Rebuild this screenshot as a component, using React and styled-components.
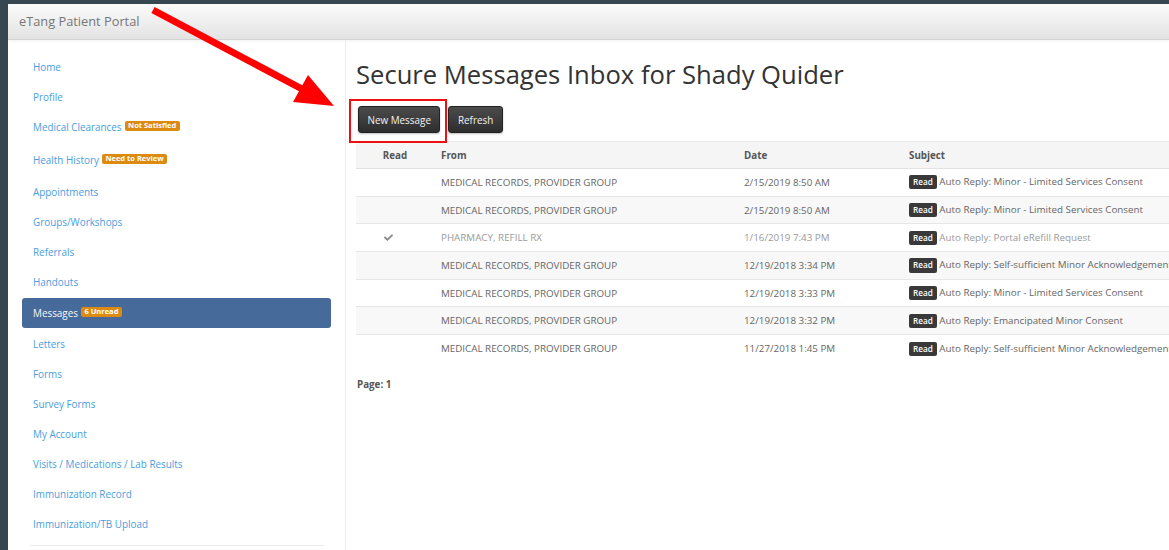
import styled, { createGlobalStyle } from "styled-components";

const GlobalStyle = createGlobalStyle`
  html, body {
    margin: 0;
    padding: 0;
    background: #364751;
    overflow: hidden;
  }
  body {
    font-family: "Open Sans", "Liberation Sans", Arial, sans-serif;
    -webkit-font-smoothing: antialiased;
  }
  * { box-sizing: border-box; }
`;

const navItems = [
  { label: "Home" },
  { label: "Profile" },
  { label: "Medical Clearances", badge: "Not Satisfied" },
  { label: "Health History", badge: "Need to Review", roomy: true },
  { label: "Appointments" },
  { label: "Groups/Workshops" },
  { label: "Referrals" },
  { label: "Handouts" },
  { label: "Messages", badge: "6 Unread", active: true },
  { label: "Letters" },
  { label: "Forms" },
  { label: "Survey Forms" },
  { label: "My Account" },
  { label: "Visits / Medications / Lab Results" },
  { label: "Immunization Record" },
  { label: "Immunization/TB Upload" },
];

const messages = [
  { from: "MEDICAL RECORDS, PROVIDER GROUP", date: "2/15/2019 8:50 AM", subject: "Auto Reply: Minor - Limited Services Consent" },
  { from: "MEDICAL RECORDS, PROVIDER GROUP", date: "2/15/2019 8:50 AM", subject: "Auto Reply: Minor - Limited Services Consent" },
  { from: "PHARMACY, REFILL RX", date: "1/16/2019 7:43 PM", subject: "Auto Reply: Portal eRefill Request", read: true },
  { from: "MEDICAL RECORDS, PROVIDER GROUP", date: "12/19/2018 3:34 PM", subject: "Auto Reply: Self-sufficient Minor Acknowledgement" },
  { from: "MEDICAL RECORDS, PROVIDER GROUP", date: "12/19/2018 3:33 PM", subject: "Auto Reply: Minor - Limited Services Consent" },
  { from: "MEDICAL RECORDS, PROVIDER GROUP", date: "12/19/2018 3:32 PM", subject: "Auto Reply: Emancipated Minor Consent" },
  { from: "MEDICAL RECORDS, PROVIDER GROUP", date: "11/27/2018 1:45 PM", subject: "Auto Reply: Self-sufficient Minor Acknowledgement" },
];

function CheckIcon() {
  return (
    <Check width="9" height="7" viewBox="0 0 512 400" fill="#8a8a8a">
      <path d="M173.9 388.3L7.5 221.9c-10-10-10-26.2 0-36.2l36.2-36.2c10-10 26.2-10 36.2 0L192 261.6 432.1 21.5c10-10 26.2-10 36.2 0l36.2 36.2c10 10 10 26.2 0 36.2L210.1 388.3c-10 10-26.2 10-36.2 0z" />
    </Check>
  );
}

export default function App() {
  return (
    <Page>
      <GlobalStyle />
      <Frame>
        <TopBar>
          <Brand>eTang Patient Portal</Brand>
        </TopBar>
        <Body>
          <Sidebar>
            <NavList>
              {navItems.map((item) => (
                <NavItem key={item.label} $active={item.active} $roomy={item.roomy}>
                  {item.label}
                  {item.badge && <Badge>{item.badge}</Badge>}
                </NavItem>
              ))}
            </NavList>
            <Divider />
          </Sidebar>
          <Main>
            <Title>Secure Messages Inbox for Shady Quider</Title>
            <Toolbar>
              <Marked>
                <Button>New Message</Button>
              </Marked>
              <Button>Refresh</Button>
            </Toolbar>
            <Table>
              <colgroup>
                <col style={{ width: 78 }} />
                <col style={{ width: 303 }} />
                <col style={{ width: 165 }} />
                <col style={{ width: 380 }} />
              </colgroup>
              <thead>
                <tr>
                  <Th $center>Read</Th>
                  <Th>From</Th>
                  <Th>Date</Th>
                  <Th>Subject</Th>
                </tr>
              </thead>
              <tbody>
                {messages.map((m, i) => (
                  <Row key={i} $striped={i % 2 === 1} $read={m.read}>
                    <Td $center>{m.read && <CheckIcon />}</Td>
                    <Td>{m.from}</Td>
                    <Td>{m.date}</Td>
                    <Td>
                      <ReadLabel>Read</ReadLabel> {m.subject}
                    </Td>
                  </Row>
                ))}
              </tbody>
            </Table>
            <Pager>Page: 1</Pager>
          </Main>
        </Body>
      </Frame>
      <Pointer viewBox="0 0 1169 550" width="1169" height="550">
        <line x1="153" y1="10" x2="302" y2="89" stroke="#ff0000" strokeWidth="7" />
        <polygon points="334,106 293,102 308,75" fill="#ff0000" />
      </Pointer>
    </Page>
  );
}

const Page = styled.div`
  position: relative;
  width: 1169px;
  height: 550px;
  padding: 4px 0 0 8px;
  overflow: hidden;
`;

const Frame = styled.div`
  height: 100%;
  background: #fff;
  display: flex;
  flex-direction: column;
`;

const TopBar = styled.header`
  height: 36px;
  flex-shrink: 0;
  display: flex;
  align-items: center;
  padding-left: 11px;
  background: linear-gradient(to bottom, #fbfbfb 0%, #e3e3e3 100%);
  border-bottom: 1px solid #d2d2d2;
  box-shadow: 0 1px 3px rgba(0, 0, 0, 0.06);
`;

const Brand = styled.span`
  font-size: 12.8px;
  color: #777;
  padding-bottom: 1px;
`;

const Body = styled.div`
  flex: 1;
  display: flex;
  min-height: 0;
`;

const Sidebar = styled.aside`
  width: 338px;
  flex-shrink: 0;
  border-right: 1px solid #ececec;
  padding: 12px 14px 0 14px;
`;

const NavList = styled.nav`
  display: flex;
  flex-direction: column;
`;

const NavItem = styled.a`
  display: flex;
  align-items: center;
  gap: 3px;
  height: ${({ $roomy }) => ($roomy ? "35px" : "30px")};
  padding: ${({ $roomy }) => ($roomy ? "1px 11px 0" : "0 11px")};
  font-size: 9.9px;
  color: ${({ $active }) => ($active ? "#f6f8fb" : "#4a9de0")};
  background: ${({ $active }) => ($active ? "#466a99" : "transparent")};
  border-radius: 3px;
  margin-top: ${({ $active }) => ($active ? "1px" : "0")};
  margin-bottom: ${({ $active }) => ($active ? "1px" : "0")};
  cursor: pointer;
`;

const Badge = styled.span`
  display: inline-block;
  background: #dd8a10;
  color: #fff;
  font-size: 7.5px;
  font-weight: 700;
  line-height: 1;
  padding: 1.5px 3.5px;
  border-radius: 2px;
  margin-top: -2px;
`;

const Divider = styled.hr`
  border: 0;
  border-top: 1px solid #ececec;
  margin: 6px 7px 0 8px;
`;

const Main = styled.main`
  flex: 1;
  min-width: 0;
  padding-left: 10px;
  overflow: hidden;
`;

const Title = styled.h1`
  margin: 21px 0 17px 0;
  font-size: 25.6px;
  line-height: 28px;
  font-weight: 400;
  color: #333;
  white-space: nowrap;
`;

const Toolbar = styled.div`
  display: flex;
  gap: 8px;
  padding-left: 2px;
  margin-bottom: 8px;
`;

const Marked = styled.div`
  position: relative;
  &::after {
    content: "";
    position: absolute;
    top: -7px;
    left: -9px;
    right: -7px;
    bottom: -10px;
    border: 2px solid #ee1111;
    pointer-events: none;
  }
`;

const Button = styled.button`
  height: 27px;
  padding: 0 8.5px;
  font-family: inherit;
  font-size: 9.9px;
  color: #f2f2f2;
  background: linear-gradient(to bottom, #4b4b4b 0%, #2e2e2e 100%);
  border: 1px solid #222;
  border-radius: 3px;
  box-shadow: 0 1px 2px rgba(0, 0, 0, 0.25);
  cursor: pointer;
`;

const Table = styled.table`
  width: 926px;
  table-layout: fixed;
  border-collapse: collapse;
  font-size: 9.8px;
  white-space: nowrap;
`;

const Th = styled.th`
  height: 27px;
  padding: 0 7px;
  text-align: ${({ $center }) => ($center ? "center" : "left")};
  font-weight: 700;
  color: #555;
  background: #f5f5f5;
  border-top: 1px solid #ebebeb;
  border-bottom: 1px solid #e2e2e2;
`;

const Row = styled.tr`
  background: ${({ $striped }) => ($striped ? "#f8f8f8" : "#fff")};
  color: ${({ $read }) => ($read ? "#9a9a9a" : "#666")};
`;

const Td = styled.td`
  height: 27.7px;
  padding: 0 7px;
  text-align: ${({ $center }) => ($center ? "center" : "left")};
  vertical-align: middle;
  border-top: 1px solid #e6e6e6;
  overflow: hidden;
  tr:first-child > & {
    border-top: 0;
  }
`;

const Check = styled.svg`
  margin-right: 13px;
`;

const ReadLabel = styled.span`
  display: inline-block;
  background: #393939;
  color: #fff;
  font-size: 8.2px;
  font-weight: 600;
  line-height: 1;
  padding: 3px 4px;
  border-radius: 2px;
  vertical-align: 0;
`;

const Pager = styled.div`
  margin-top: 16px;
  font-size: 9.8px;
  font-weight: 700;
  color: #555;
  padding-left: 1px;
`;

const Pointer = styled.svg`
  position: absolute;
  top: 0;
  left: 0;
  pointer-events: none;
`;
